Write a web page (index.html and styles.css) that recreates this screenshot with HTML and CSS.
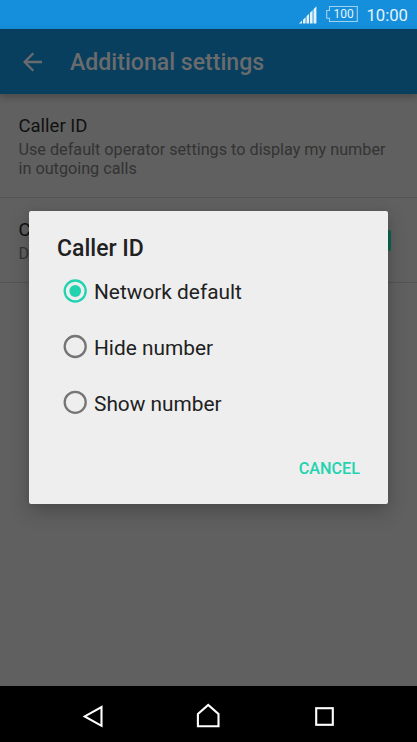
FILE: index.html
```html
<!DOCTYPE html>
<html lang="en">
<head>
<meta charset="utf-8">
<title>Additional settings</title>
<link rel="stylesheet" href="styles.css">
</head>
<body>
<div class="phone">
  <div class="status">
    <svg class="signal" width="18" height="18" viewBox="0 0 18 18"><path d="M0 17.500L3 14.600V17.500zM4 17.500v-3.700l2.600-2.500v6.200zM7.500 17.500v-7.200l2.600-2.500v9.700zM11 17.500V6.800l2.600-2.500v13.200zM14.500 17.500V3.200L17.400.3v17.200z" fill="#e6f3fb"/></svg>
    <div class="battery">
      <svg width="32" height="17" viewBox="0 0 32 17"><path d="M3.500.5H31.300v15H3.500v-3.300H.7V4.500h2.800z" fill="none" stroke="#9fd1f1" stroke-width="1.100"/></svg>
      <span class="level">100</span>
    </div>
    <span class="clock">10:00</span>
  </div>
  <header class="appbar">
    <svg class="back" width="20" height="20" viewBox="0 0 20 20"><path d="M19 10H2M10.300 1.300L1.600 10l8.700 8.700" fill="none" stroke="#6a6b6d" stroke-width="2.300"/></svg>
    <h1>Additional settings</h1>
  </header>
  <main class="content">
    <section class="setting first">
      <div class="name">Caller ID</div>
      <div class="desc">Use default operator settings to display my number<br>in outgoing calls</div>
    </section>
    <section class="setting second">
      <div>
        <div class="name">C</div>
        <div class="desc">D</div>
      </div>
      <div class="check"></div>
    </section>
  </main>
  <nav class="nav">
    <svg width="20" height="23" viewBox="0 0 20 23"><path d="M18.500 2v18.800L1.700 11.400z" fill="none" stroke="#fff" stroke-width="2.100"/></svg>
    <svg class="home" width="24" height="25" viewBox="0 0 24 25"><path d="M1.900 11L12.200 1.900 22.500 11v12.200H1.900z" fill="none" stroke="#fff" stroke-width="2.100"/></svg>
    <svg width="19" height="19" viewBox="0 0 19 19"><rect x="1.200" y="1.200" width="16.600" height="16.600" fill="none" stroke="#fff" stroke-width="2.100"/></svg>
  </nav>
  <div class="dialog" role="dialog">
    <h2>Caller ID</h2>
    <div class="option selected"><svg class="radio" width="24" height="24" viewBox="0 0 24 24"><circle class="ring" cx="12.200" cy="12" r="10.500"/><circle class="dot" cx="12.200" cy="12" r="5.900"/></svg><span>Network default</span></div>
    <div class="option"><svg class="radio" width="24" height="24" viewBox="0 0 24 24"><circle class="ring" cx="12.200" cy="11.500" r="10.500"/></svg><span>Hide number</span></div>
    <div class="option"><svg class="radio" width="24" height="24" viewBox="0 0 24 24"><circle class="ring" cx="12.200" cy="11.300" r="10.500"/></svg><span>Show number</span></div>
    <div class="cancel">CANCEL</div>
  </div>
</div>
</body>
</html>
```
FILE: styles.css
```css
* { box-sizing: border-box; }
body { margin: 0; font-family: Roboto, "Liberation Sans", sans-serif; }
h1, h2 { margin: 0; font-weight: 500; white-space: nowrap; }
svg { display: block; flex: none; overflow: visible; }

.phone {
  position: relative;
  width: 417px;
  height: 742px;
  overflow: hidden;
  display: flex;
  flex-direction: column;
  background: #606060;
}
.status {
  height: 29px;
  flex: none;
  display: flex;
  justify-content: flex-end;
  padding: 6px 9px 0 0;
  background: #158fdb;
}
.signal { margin-right: 9px; }
.battery { position: relative; width: 32px; margin-right: 8px; }
.level {
  position: absolute;
  left: 7px;
  top: 1px;
  font-size: 12px;
  line-height: 15px;
  color: #e6f3fb;
}
.clock { font-size: 16.700px; line-height: 19px; color: #e6f3fb; }

.appbar {
  position: relative;
  height: 65px;
  flex: none;
  display: flex;
  align-items: center;
  padding-left: 23px;
  background: #083f5f;
  box-shadow: 0 3px 7px rgba(0, 0, 0, .25);
}
.back { margin-right: 27px; }
.appbar h1 { padding-top: 2px; font-size: 23.100px; line-height: 28px; color: #6a6b6d; }

.content { flex: 1; }
.setting { padding: 21px 25px 0 18.500px; border-bottom: 1px solid #545454; }
.first { height: 104px; }
.second { height: 85px; display: flex; justify-content: space-between; }
.name { font-size: 18.500px; line-height: 22px; color: #111; }
.desc { margin-top: 3px; font-size: 16.220px; line-height: 19px; color: #333; white-space: nowrap; }
.check { width: 21px; height: 21px; margin: 11px 1.500px 0 0; border-radius: 2px; background: #0d6551; }

.nav {
  height: 56px;
  flex: none;
  display: grid;
  grid-template-columns: 116px 116px 116px;
  justify-content: center;
  justify-items: center;
  align-items: center;
  padding-top: 4px;
  background: #000;
}
.home { margin: -2px 1px 0 0; }

.dialog {
  position: absolute;
  left: 29px;
  top: 211px;
  width: 359px;
  height: 293px;
  padding: 24px 28px 0;
  border-radius: 2px;
  background: #eee;
  box-shadow: 0 8px 20px rgba(0, 0, 0, .22), 0 0 6px rgba(0, 0, 0, .08);
  color: #212121;
}
.dialog h2 { font-size: 23px; line-height: 28px; }
.option {
  display: flex;
  align-items: center;
  gap: 7px;
  height: 24px;
  margin: 16px 0 32px 6px;
  font-size: 20.850px;
}
.option + .option { margin-top: 0; }
.option span { padding-top: 1px; }
.ring { fill: none; stroke: #757575; stroke-width: 2.300px; }
.selected .ring { stroke: #22d3b0; }
.dot { fill: #22d3b0; }
.cancel {
  margin-top: 43.600px;
  text-align: right;
  font-size: 16.200px;
  font-weight: 500;
  line-height: 19px;
  color: #22d3b0;
}
```
